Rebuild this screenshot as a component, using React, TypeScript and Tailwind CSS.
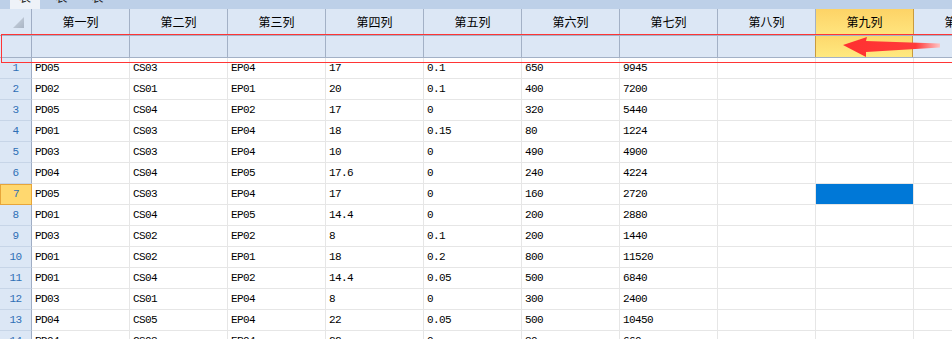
import React from "react";

const cols = ["第一列", "第二列", "第三列", "第四列", "第五列", "第六列", "第七列", "第八列", "第九列", "第十列"];

const rows: string[][] = [
  ["PD05", "CS03", "EP04", "17", "0.1", "650", "9945"],
  ["PD02", "CS01", "EP01", "20", "0.1", "400", "7200"],
  ["PD05", "CS04", "EP02", "17", "0", "320", "5440"],
  ["PD01", "CS03", "EP04", "18", "0.15", "80", "1224"],
  ["PD03", "CS03", "EP04", "10", "0", "490", "4900"],
  ["PD04", "CS04", "EP05", "17.6", "0", "240", "4224"],
  ["PD05", "CS03", "EP04", "17", "0", "160", "2720"],
  ["PD01", "CS04", "EP05", "14.4", "0", "200", "2880"],
  ["PD03", "CS02", "EP02", "8", "0.1", "200", "1440"],
  ["PD01", "CS02", "EP01", "18", "0.2", "800", "11520"],
  ["PD01", "CS04", "EP02", "14.4", "0.05", "500", "6840"],
  ["PD03", "CS01", "EP04", "8", "0", "300", "2400"],
  ["PD04", "CS05", "EP04", "22", "0.05", "500", "10450"],
  ["PD04", "CS03", "EP04", "22", "0", "30", "660"],
];

const mono = { fontFamily: '"Liberation Mono", "Noto Sans CJK SC", monospace' };
const cjk = { fontFamily: '"Noto Sans CJK SC", "Liberation Sans", sans-serif' };

const App = () => {
  return (
    <div className="relative w-[952px] h-[339px] overflow-hidden bg-white">
      {/* tab strip, mostly scrolled away */}
      <div className="flex h-[9px] bg-[#bdd0e8] overflow-hidden text-[12px] text-[#222]" style={cjk}>
        <div className="ml-[10px] w-[30px] bg-[#eef2f8] flex justify-center">
          <span className="-mt-[12px]">表</span>
        </div>
        <div className="w-[37px] flex justify-center">
          <span className="-mt-[12px] ml-[6px]">表</span>
        </div>
        <div className="w-[37px] flex justify-center">
          <span className="-mt-[12px] ml-[4px]">表</span>
        </div>
      </div>

      {/* column header */}
      <div className="flex h-[27px] bg-[#dce7f5] border-b border-[#a3b1c6] text-[12px] text-black" style={cjk}>
        <div className="w-[32px] shrink-0 border-r border-[#9fadc4] flex items-end justify-end pr-[7px] pb-[7px]">
          <svg width="11" height="11" viewBox="0 0 11 11">
            <defs>
              <linearGradient id="tri" x1="0" y1="0" x2="1" y2="1">
                <stop offset="0" stopColor="#cdd6e1" />
                <stop offset="1" stopColor="#a9b5c4" />
              </linearGradient>
            </defs>
            <polygon points="11,0 11,11 0,11" fill="url(#tri)" />
          </svg>
        </div>
        {cols.map((c, i) =>
          i === 8 ? (
            <div
              key={c}
              className="w-[98px] shrink-0 border-r border-[#c99b3e] bg-gradient-to-b from-[#fdd366] to-[#ffe57e] flex items-center justify-center"
            >
              {c}
            </div>
          ) : (
            <div key={c} className="w-[98px] shrink-0 border-r border-[#a3b1c6] flex items-center justify-center">
              {c}
            </div>
          )
        )}
      </div>

      {/* filter row */}
      <div className="flex h-[22px] bg-[#dce7f5] border-b border-[#a3b1c6]">
        <div className="w-[32px] shrink-0 border-r border-[#9fadc4]" />
        {cols.map((c, i) =>
          i === 8 ? (
            <div
              key={c}
              className="w-[98px] shrink-0 border-r border-l border-[#c99b3e] -ml-[1px] bg-gradient-to-b from-[#fdd86c] to-[#ffe980]"
            />
          ) : (
            <div key={c} className="w-[98px] shrink-0 border-r border-[#a3b1c6]" />
          )
        )}
      </div>

      {/* data rows */}
      <div className="text-[11px] tracking-[-0.6px] text-black" style={mono}>
        {rows.map((r, ri) => (
          <div key={ri} className="flex h-[21px]">
            {ri === 6 ? (
              <div className="w-[32px] shrink-0 bg-[#ffd86f] border border-[#e7a53a] flex items-center justify-center text-[#2f6fb5]">
                {ri + 1}
              </div>
            ) : (
              <div className="w-[32px] shrink-0 bg-[#dce7f5] border-r border-[#9fadc4] border-b border-b-[#c7d5e7] flex items-center justify-center text-[#2f6fb5]">
                {ri + 1}
              </div>
            )}
            {cols.map((c, ci) => (
              <div
                key={c}
                className={
                  ri === 6 && ci === 8
                    ? "w-[98px] shrink-0 border-r border-b border-[#e6e6e6] bg-[#0078d7]"
                    : "w-[98px] shrink-0 border-r border-b border-[#e6e6e6] flex items-center pl-[3px] whitespace-pre"
                }
              >
                {ci < 7 ? r[ci].replace(".", ". ").replace(". ", ".") : ""}
              </div>
            ))}
          </div>
        ))}
      </div>

      {/* red marker box over the filter row */}
      <div className="absolute left-[1px] top-[34px] w-[980px] h-[29px] border border-[#ff3535]" />

      {/* red arrow pointing to column nine */}
      <svg className="absolute left-[840px] top-[34px]" width="112" height="26" viewBox="0 0 112 26">
        <defs>
          <linearGradient id="arr" x1="0" y1="0" x2="1" y2="0">
            <stop offset="0" stopColor="#ff3030" />
            <stop offset="0.75" stopColor="#ff3a3a" />
            <stop offset="1" stopColor="#ffc4c4" />
          </linearGradient>
        </defs>
        <polygon points="3,11 27,3 26,7 100,9.5 100,13.5 26,18 26,23" fill="url(#arr)" />
      </svg>
    </div>
  );
};

export default App;
